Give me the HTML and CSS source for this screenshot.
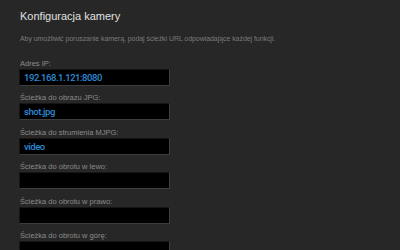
FILE: index.html
```html
<!DOCTYPE html>
<html lang="pl">
<head>
    <meta charset="UTF-8">
    <title>Konfiguracja kamery</title>
    <link rel="stylesheet" href="styles.css">
</head>
<body>
    <div class="container">
        <h1>Konfiguracja kamery</h1>
        <p class="intro">Aby umożliwić poruszanie kamerą, podaj ścieżki URL odpowiadające każdej funkcji.</p>

        <form id="cameraForm">
            <div class="form-group">
                <label for="ip">Adres IP:</label>
                <input type="text" id="ip" value="192.168.1.121:8080">
            </div>
            <div class="form-group">
                <label for="jpg">Ścieżka do obrazu JPG:</label>
                <input type="text" id="jpg" value="shot.jpg">
            </div>
            <div class="form-group">
                <label for="mjpg">Ścieżka do strumienia MJPG:</label>
                <input type="text" id="mjpg" value="video">
            </div>
            <div class="form-group">
                <label for="left">Ścieżka do obrotu w lewo:</label>
                <input type="text" id="left">
            </div>
            <div class="form-group">
                <label for="right">Ścieżka do obrotu w prawo:</label>
                <input type="text" id="right">
            </div>
            <div class="form-group">
                <label for="up">Ścieżka do obrotu w górę:</label>
                <input type="text" id="up">
            </div>
        </form>
    </div>
</body>
</html>
```

FILE: styles.css
```css
body {
    font-family: "Liberation Sans", Arial, sans-serif;
    background-color: #272727;
    margin: 0;
    padding: 0;
}

.container {
    padding: 9px 20px;
}

h1 {
    font-size: 11px;
    line-height: 14px;
    font-weight: normal;
    color: #e0e0e0;
    margin: 0 0 11px 0;
}

.intro {
    font-size: 7px;
    line-height: 10px;
    letter-spacing: -0.06px;
    color: #7a7a7a;
    margin: 0 0 15px 0;
}

.form-group {
    margin-bottom: 7.4px;
}

label {
    display: block;
    font-size: 7.5px;
    line-height: 10px;
    color: #8a8a8a;
}

input {
    display: block;
    width: 151px;
    height: 17px;
    margin-left: -1px;
    padding: 0 4px;
    border: 1px solid #3e3e3e;
    border-top-color: #151515;
    border-left-color: #151515;
    background-color: #000;
    color: #2b8bd6;
    font-family: Roboto, "Liberation Sans", sans-serif;
    font-size: 9.5px;
    font-weight: 500;
    letter-spacing: -0.45px;
    box-sizing: border-box;
    outline: none;
}
```
